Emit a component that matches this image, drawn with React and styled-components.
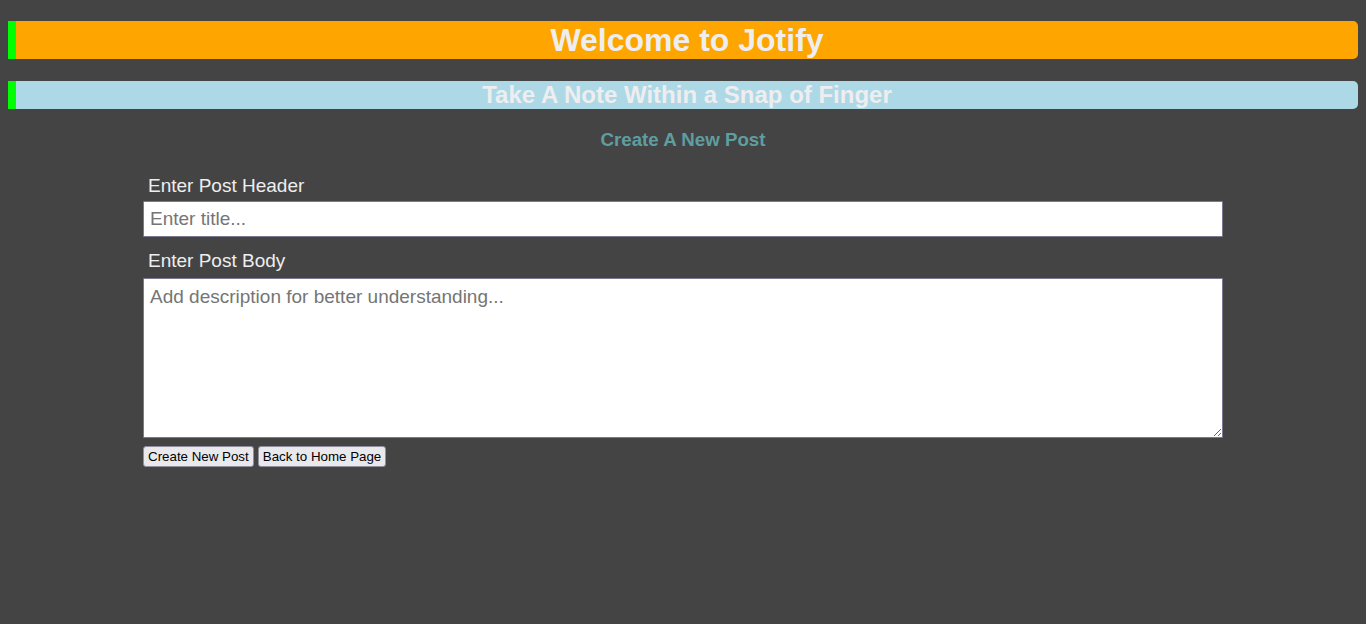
import React from "react";
import styled, { createGlobalStyle } from "styled-components";

const GlobalStyle = createGlobalStyle`
  html, body {
    margin: 0;
    padding: 0;
    background: #444444;
  }
  body {
    font-family: "Liberation Sans", Arial, sans-serif;
    min-height: 624px;
  }
`;

const Page = styled.div`
  padding: 21px 8px 0;
  display: flex;
  flex-direction: column;
`;

const Banner = styled.h1`
  margin: 0;
  margin-top: ${(p) => p.$top || 0}px;
  height: ${(p) => p.$height}px;
  line-height: ${(p) => p.$height}px;
  font-size: ${(p) => p.$size}px;
  font-weight: bold;
  text-align: center;
  color: #eeeef0;
  background: ${(p) => p.$bg};
  border-left: 8px solid #00ff00;
  border-radius: 0 5px 5px 0;
`;

const SectionTitle = styled.h3`
  margin: 20px 0 0;
  height: 21px;
  line-height: 21px;
  font-size: 18.72px;
  font-weight: bold;
  text-align: center;
  color: #5f9ea0;
`;

const Form = styled.form`
  width: 80%;
  margin: 0 auto;
  display: flex;
  flex-direction: column;
`;

const Label = styled.label`
  display: block;
  margin-top: ${(p) => p.$top}px;
  padding-left: 5px;
  font-size: 19px;
  line-height: 21px;
  color: #eeeeee;
`;

const TextInput = styled.input`
  box-sizing: border-box;
  margin-top: 5px;
  width: 100%;
  height: 36px;
  padding: 0 6px;
  font-family: "Liberation Sans", Arial, sans-serif;
  font-size: 19px;
  color: #222;
  background: #ffffff;
  border: 1px solid #7b7890;
  border-radius: 1px;
  outline: none;
  &::placeholder {
    color: #757575;
  }
`;

const TextArea = styled.textarea`
  box-sizing: border-box;
  display: block;
  margin-top: 7px;
  width: 100%;
  height: 160px;
  padding: 7px 6px;
  font-family: "Liberation Sans", Arial, sans-serif;
  font-size: 19px;
  color: #222;
  background: #ffffff;
  border: 1px solid #7b7890;
  border-radius: 1px;
  outline: none;
  resize: both;
  &::placeholder {
    color: #757575;
  }
`;

const ButtonRow = styled.div`
  display: flex;
  gap: 4px;
  margin-top: 8px;
`;

const Button = styled.button`
  box-sizing: border-box;
  height: 21px;
  padding: 0 4px;
  font-family: "Liberation Sans", Arial, sans-serif;
  font-size: 13.333px;
  color: #000;
  background: #e9e9ed;
  border: 1px solid #8f8f9d;
  border-radius: 3px;
  cursor: pointer;
`;

export default function App() {
  return (
    <>
      <GlobalStyle />
      <Page>
        <Banner $height={38} $size={32} $bg="#ffa500">
          Welcome to Jotify
        </Banner>
        <Banner as="h2" $top={22} $height={28} $size={24} $bg="#add8e6">
          Take A Note Within a Snap of Finger
        </Banner>
        <SectionTitle>Create A New Post</SectionTitle>
        <Form onSubmit={(e) => e.preventDefault()}>
          <Label $top={25} htmlFor="title">
            Enter Post Header
          </Label>
          <TextInput id="title" type="text" placeholder="Enter title..." />
          <Label $top={13} htmlFor="body">
            Enter Post Body
          </Label>
          <TextArea
            id="body"
            placeholder="Add description for better understanding..."
          />
          <ButtonRow>
            <Button type="submit">Create New Post</Button>
            <Button type="button">Back to Home Page</Button>
          </ButtonRow>
        </Form>
      </Page>
    </>
  );
}
